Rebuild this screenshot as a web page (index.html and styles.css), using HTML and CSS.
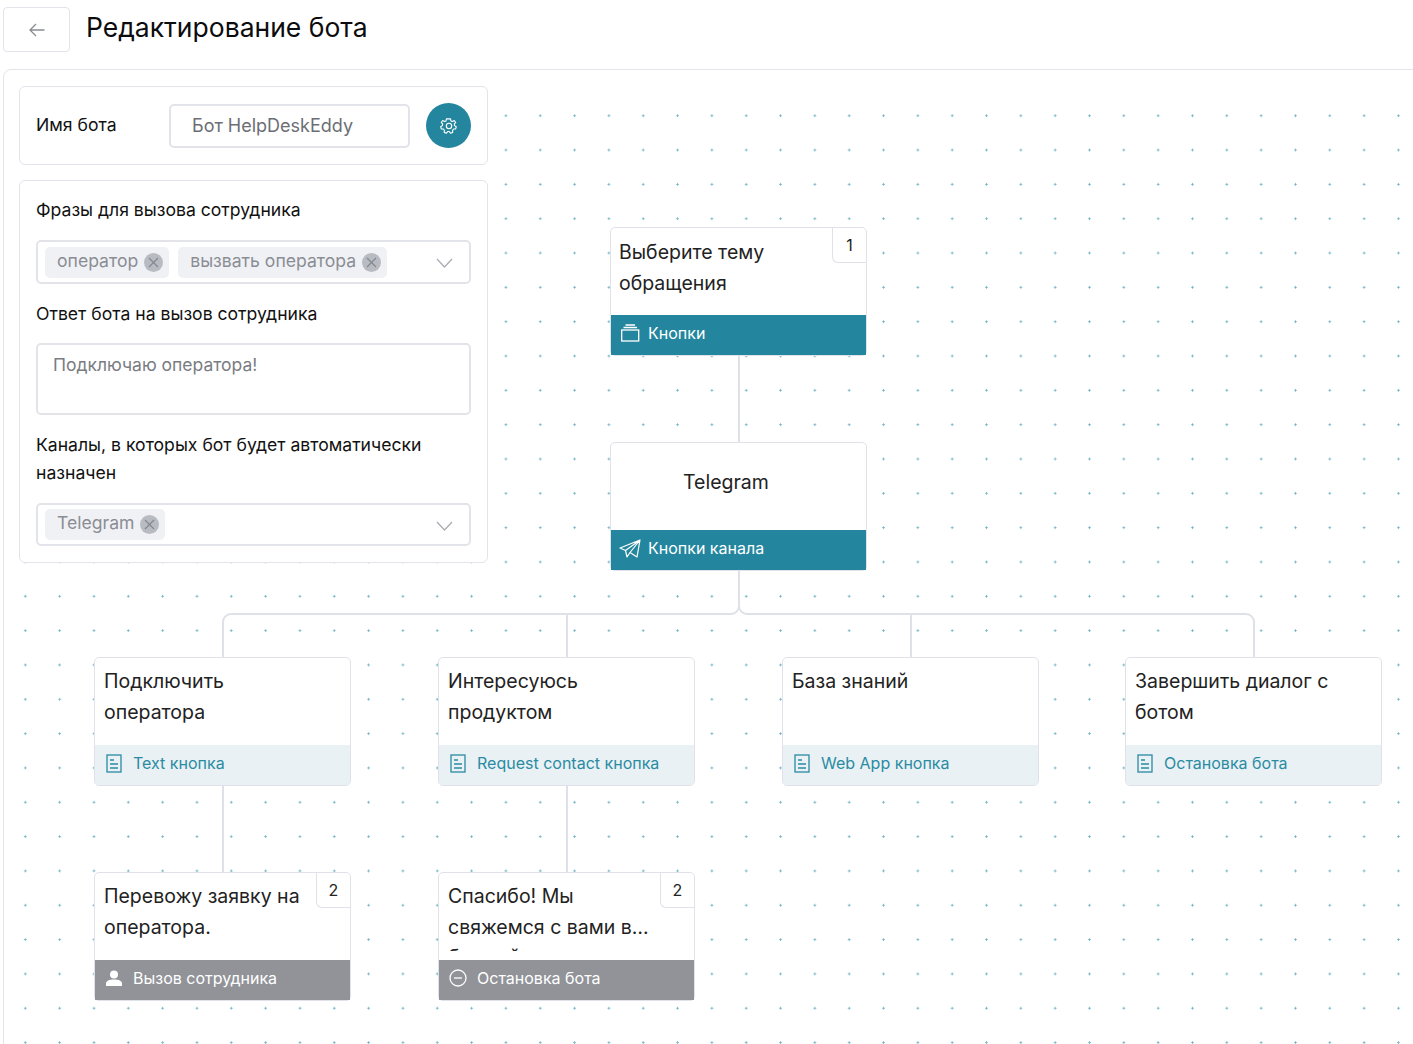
FILE: index.html
```html
<!DOCTYPE html>
<html lang="ru">
<head>
    <meta charset="UTF-8">
    <title>Редактирование бота</title>
    <link rel="stylesheet" href="styles.css">
</head>
<body>
    <!-- Header -->
    <header class="page-header">
        <button class="back-btn">
            <svg class="back-icon" width="16" height="14" viewBox="0 0 16 14" fill="none" stroke="#8a8c92" stroke-width="1.3">
                <path d="M15.5 7H1M7 1L1 7l6 6"/>
            </svg>
        </button>
        <h1 class="page-title">Редактирование бота</h1>
    </header>

    <!-- Canvas -->
    <main class="canvas">
        <svg class="lines" width="1420" height="980" fill="none" stroke="#dfe1e9" stroke-width="2">
            <path d="M735 286V373M735 501V536a8 8 0 0 1-8 8H227a8 8 0 0 0-8 8V588"/>
            <path d="M735 501V536a8 8 0 0 0 8 8H1242a8 8 0 0 1 8 8V588"/>
            <path d="M563 544V588M907 544V588"/>
            <path d="M219 716V803M563 716V803"/>
        </svg>

        <aside class="panel">
            <section class="card name-card">
                <label class="name-label">Имя бота</label>
                <div class="name-input">Бот HelpDeskEddy</div>
                <button class="settings-btn">
                    <svg width="18" height="18" viewBox="0 0 24 24" fill="none" stroke="#fff" stroke-width="1.5" stroke-linejoin="round">
                        <path d="M12 2.5l2 0 .6 2.7 2 .9 2.4-1.4 2 2.6-1.9 2 .3 2.2 2.3 1.4-.8 3-2.8.1-1.4 1.700.3 2.800-3 1.100-1.600-2.300h-2.200l-1.600 2.300-3-1.100.3-2.800-1.400-1.700-2.800-.1-.8-3 2.300-1.400.3-2.200-1.900-2 2-2.600 2.400 1.400 2-.9.6-2.700z"/>
                        <circle cx="12" cy="12" r="3.600"/>
                    </svg>
                </button>
            </section>

            <section class="card form-card">
                <label class="field-label first">Фразы для вызова сотрудника</label>
                <div class="select">
                    <span class="chip">оператор <i class="chip-x"><svg width="11" height="11" viewBox="0 0 11 11" stroke="#84868d" stroke-width="1.100"><path d="M1 1l9 9M10 1l-9 9"/></svg></i></span>
                    <span class="chip">вызвать оператора <i class="chip-x"><svg width="11" height="11" viewBox="0 0 11 11" stroke="#84868d" stroke-width="1.100"><path d="M1 1l9 9M10 1l-9 9"/></svg></i></span>
                    <svg class="chevron" width="17" height="10" viewBox="0 0 17 10" fill="none" stroke="#a9abb2" stroke-width="1.200"><path d="M1 1l7.500 8L16 1"/></svg>
                </div>

                <label class="field-label reply">Ответ бота на вызов сотрудника</label>
                <div class="textarea">Подключаю оператора!</div>

                <label class="field-label wide">Каналы, в которых бот будет автоматически назначен</label>
                <div class="select short">
                    <span class="chip">Telegram <i class="chip-x"><svg width="11" height="11" viewBox="0 0 11 11" stroke="#84868d" stroke-width="1.100"><path d="M1 1l9 9M10 1l-9 9"/></svg></i></span>
                    <svg class="chevron" width="17" height="10" viewBox="0 0 17 10" fill="none" stroke="#a9abb2" stroke-width="1.200"><path d="M1 1l7.500 8L16 1"/></svg>
                </div>
            </section>
        </aside>

        <!-- Nodes -->
        <div class="node n-question">
            <div class="node-body">Выберите тему обращения</div>
            <span class="node-badge">1</span>
            <div class="node-foot teal">
                <svg width="20" height="18" viewBox="0 0 20 18" fill="none" stroke="#fff" stroke-width="1.300"><rect x="1.700" y="6" width="17" height="11"/><path d="M3.500 3.500h13.500M5.500 1h9.500"/></svg>
                Кнопки
            </div>
        </div>

        <div class="node n-channel">
            <div class="node-body center">Telegram</div>
            <div class="node-foot teal">
                <svg class="plane" width="22" height="19" viewBox="0 0 22 19" fill="none" stroke="#fff" stroke-width="1.200" stroke-linejoin="round"><path d="M21 1L1 9l5.500 2.500L21 1zM21 1l-3 17-7-4.500L21 1zM6.500 11.500L8 18l3-4.500"/></svg>
                Кнопки канала
            </div>
        </div>

        <div class="node n-btn1">
            <div class="node-body">Подключить оператора</div>
            <div class="node-foot light">
                <svg class="doc" width="16" height="19" viewBox="0 0 16 19" fill="none" stroke="#2a8ba3" stroke-width="1.300"><rect x="1" y="1" width="14" height="17"/><path d="M4 6h4M4 10h8M4 14h8"/></svg>
                Text кнопка
            </div>
        </div>

        <div class="node n-btn2">
            <div class="node-body">Интересуюсь продуктом</div>
            <div class="node-foot light">
                <svg class="doc" width="16" height="19" viewBox="0 0 16 19" fill="none" stroke="#2a8ba3" stroke-width="1.300"><rect x="1" y="1" width="14" height="17"/><path d="M4 6h4M4 10h8M4 14h8"/></svg>
                Request contact кнопка
            </div>
        </div>

        <div class="node n-btn3">
            <div class="node-body">База знаний</div>
            <div class="node-foot light">
                <svg class="doc" width="16" height="19" viewBox="0 0 16 19" fill="none" stroke="#2a8ba3" stroke-width="1.300"><rect x="1" y="1" width="14" height="17"/><path d="M4 6h4M4 10h8M4 14h8"/></svg>
                Web App кнопка
            </div>
        </div>

        <div class="node n-btn4">
            <div class="node-body">Завершить диалог с ботом</div>
            <div class="node-foot light">
                <svg class="doc" width="16" height="19" viewBox="0 0 16 19" fill="none" stroke="#2a8ba3" stroke-width="1.300"><rect x="1" y="1" width="14" height="17"/><path d="M4 6h4M4 10h8M4 14h8"/></svg>
                Остановка бота
            </div>
        </div>

        <div class="node n-call">
            <div class="node-body">Перевожу заявку на оператора.</div>
            <span class="node-badge">2</span>
            <div class="node-foot grey">
                <svg class="doc" width="16" height="16" viewBox="0 0 16 16" fill="#fff"><circle cx="8" cy="4.500" r="4"/><path d="M0 16v-2.500C0 11 3 9.500 8 9.500s8 1.500 8 4V16z"/></svg>
                Вызов сотрудника
            </div>
        </div>

        <div class="node n-stop">
            <div class="node-body clipped">Спасибо! Мы свяжемся с вами в ближайшее время.</div>
            <span class="node-badge">2</span>
            <div class="node-foot grey">
                <svg class="stop" width="18" height="18" viewBox="0 0 18 18" fill="none" stroke="#fff" stroke-width="1.300"><circle cx="9" cy="9" r="8"/><path d="M5 9h8"/></svg>
                Остановка бота
            </div>
        </div>
    </main>
</body>
</html>
```

FILE: styles.css
```css
html, body {
    height: 100%;
}

body {
    margin: 0;
    overflow: hidden;
    background: #fff;
    color: #111;
    font-family: Inter, "Liberation Sans", sans-serif;
}

/* Header */
.page-header {
    display: flex;
    align-items: flex-start;
    gap: 16px;
    height: 69px;
    padding: 7px 0 0 3px;
    box-sizing: border-box;
}

.back-btn {
    width: 67px;
    height: 45px;
    background: #fff;
    border: 1px solid #e3e4ea;
    border-radius: 4px;
    padding: 0;
}

.back-icon {
    display: block;
    margin: 1px auto 0;
}

.page-title {
    margin: 0;
    font-size: 26.5px;
    font-weight: 400;
    line-height: 40px;
    color: #0c0c0e;
}

/* Canvas */
.canvas {
    position: relative;
    margin-left: 3px;
    width: 1430px;
    height: 1000px;
    padding: 16px 0 0 15px;
    box-sizing: border-box;
    border: 1px solid #e3e4ea;
    border-radius: 8px 0 0 0;
    background-color: #fff;
    background-image: linear-gradient(#fff, #fff), radial-gradient(circle, #6fb3c3 0.9px, transparent 1.3px);
    background-size: 100% 28px, 34.33px 34.33px;
    background-repeat: no-repeat, repeat;
    background-position: 0 0, 4.17px 28.55px;
}

.lines {
    position: absolute;
    left: 0;
    top: 0;
}

/* Left panel */
.panel {
    position: relative;
    display: flex;
    flex-direction: column;
    gap: 15px;
    width: 469px;
}

.card {
    background: #fff;
    border: 1px solid #e3e4ea;
    border-radius: 6px;
    box-sizing: border-box;
    padding: 0 16px;
}

.name-card {
    display: flex;
    align-items: center;
    height: 79px;
}

.name-label {
    width: 133px;
    padding-bottom: 2px;
    font-size: 17.6px;
}

.name-input {
    width: 241px;
    height: 44px;
    line-height: 40px;
    padding-left: 21px;
    box-sizing: border-box;
    border: 2px solid #e3e4ea;
    border-radius: 5px;
    font-size: 18px;
    color: #6c6e74;
}

.settings-btn {
    display: flex;
    align-items: center;
    justify-content: center;
    width: 45px;
    height: 45px;
    margin-left: 16px;
    padding: 0;
    background: #24869e;
    border: none;
    border-radius: 50%;
}

.form-card {
    height: 383px;
}

.field-label {
    display: block;
    margin: 16px 0 15px;
    font-size: 17.6px;
    line-height: 28px;
}

.field-label.first {
    margin-top: 15px;
    margin-bottom: 16px;
}

.field-label.reply {
    margin-top: 16px;
}

.field-label.wide {
    margin-bottom: 16px;
    width: 400px;
}

.select {
    position: relative;
    display: flex;
    align-items: center;
    gap: 9px;
    height: 44px;
    padding-left: 7px;
    box-sizing: border-box;
    border: 2px solid #e3e4ea;
    border-radius: 5px;
}

.select.short {
    height: 43px;
}

.chip {
    display: flex;
    align-items: center;
    gap: 6px;
    height: 31px;
    padding: 0 6px 4px 12px;
    box-sizing: border-box;
    background: #f0f1f5;
    border-radius: 5px;
    font-size: 17.6px;
    color: #8b8d94;
}

.chip-x {
    display: flex;
    align-items: center;
    justify-content: center;
    width: 19px;
    height: 19px;
    margin-top: 4px;
    background: #b9bbc2;
    border-radius: 50%;
}

.chevron {
    position: absolute;
    right: 16px;
    top: 16px;
}

.textarea {
    height: 72px;
    padding: 7px 15px;
    box-sizing: border-box;
    border: 2px solid #e3e4ea;
    border-radius: 5px;
    font-size: 17.5px;
    line-height: 26px;
    color: #7a7c82;
}

/* Nodes */
.node {
    position: absolute;
    display: flex;
    flex-direction: column;
    width: 257px;
    height: 129px;
    box-sizing: border-box;
    background: #fff;
    border: 1px solid #e1e2e9;
    border-radius: 5px;
}

.n-question { left: 606px; top: 157px; }
.n-channel  { left: 606px; top: 372px; }
.n-btn1 { left: 90px; top: 587px; }
.n-btn2 { left: 434px; top: 587px; }
.n-btn3 { left: 778px; top: 587px; }
.n-btn4 { left: 1121px; top: 587px; }
.n-call { left: 90px; top: 802px; }
.n-stop { left: 434px; top: 802px; }

.node-body {
    flex: 1;
    padding: 8px 40px 0 9px;
    overflow: hidden;
    font-size: 19.5px;
    line-height: 30.6px;
    color: #222;
}

.n-question .node-body {
    padding: 9px 40px 0 8px;
}

.node-body.center {
    padding: 24px 0 0 72px;
}

/* two lines and an ellipsis, the tops of the third line still show */
.node-body.clipped {
    flex: none;
    display: -webkit-box;
    -webkit-box-orient: vertical;
    -webkit-line-clamp: 2;
    box-sizing: border-box;
    height: 78px;
}

.node-badge {
    position: absolute;
    right: 0;
    top: 0;
    width: 34px;
    height: 35px;
    line-height: 34px;
    text-align: center;
    box-sizing: border-box;
    background: #fff;
    border: 1px solid #e1e2e9;
    border-width: 0 0 1px 1px;
    border-radius: 0 5px 0 6px;
    font-size: 16px;
    color: #222;
}

.node-foot {
    display: flex;
    align-items: center;
    gap: 8px;
    flex: none;
    height: 40px;
    margin-top: auto;
    padding: 0 0 4px 9px;
    box-sizing: border-box;
    font-size: 16px;
}

.node-foot .doc {
    margin: 0 3px 0 2px;
}

.node-foot .plane {
    margin: 0 -1px 0 -1px;
}

.node-foot .stop {
    margin: 0 2px 0 1px;
}

.node-foot.teal {
    background: #24869e;
    color: #fff;
}

.node-foot.light {
    background: #e9f1f4;
    color: #2a8ba3;
    border-radius: 0 0 4px 4px;
}

.node-foot.grey {
    background: #919399;
    color: #fff;
}
```
